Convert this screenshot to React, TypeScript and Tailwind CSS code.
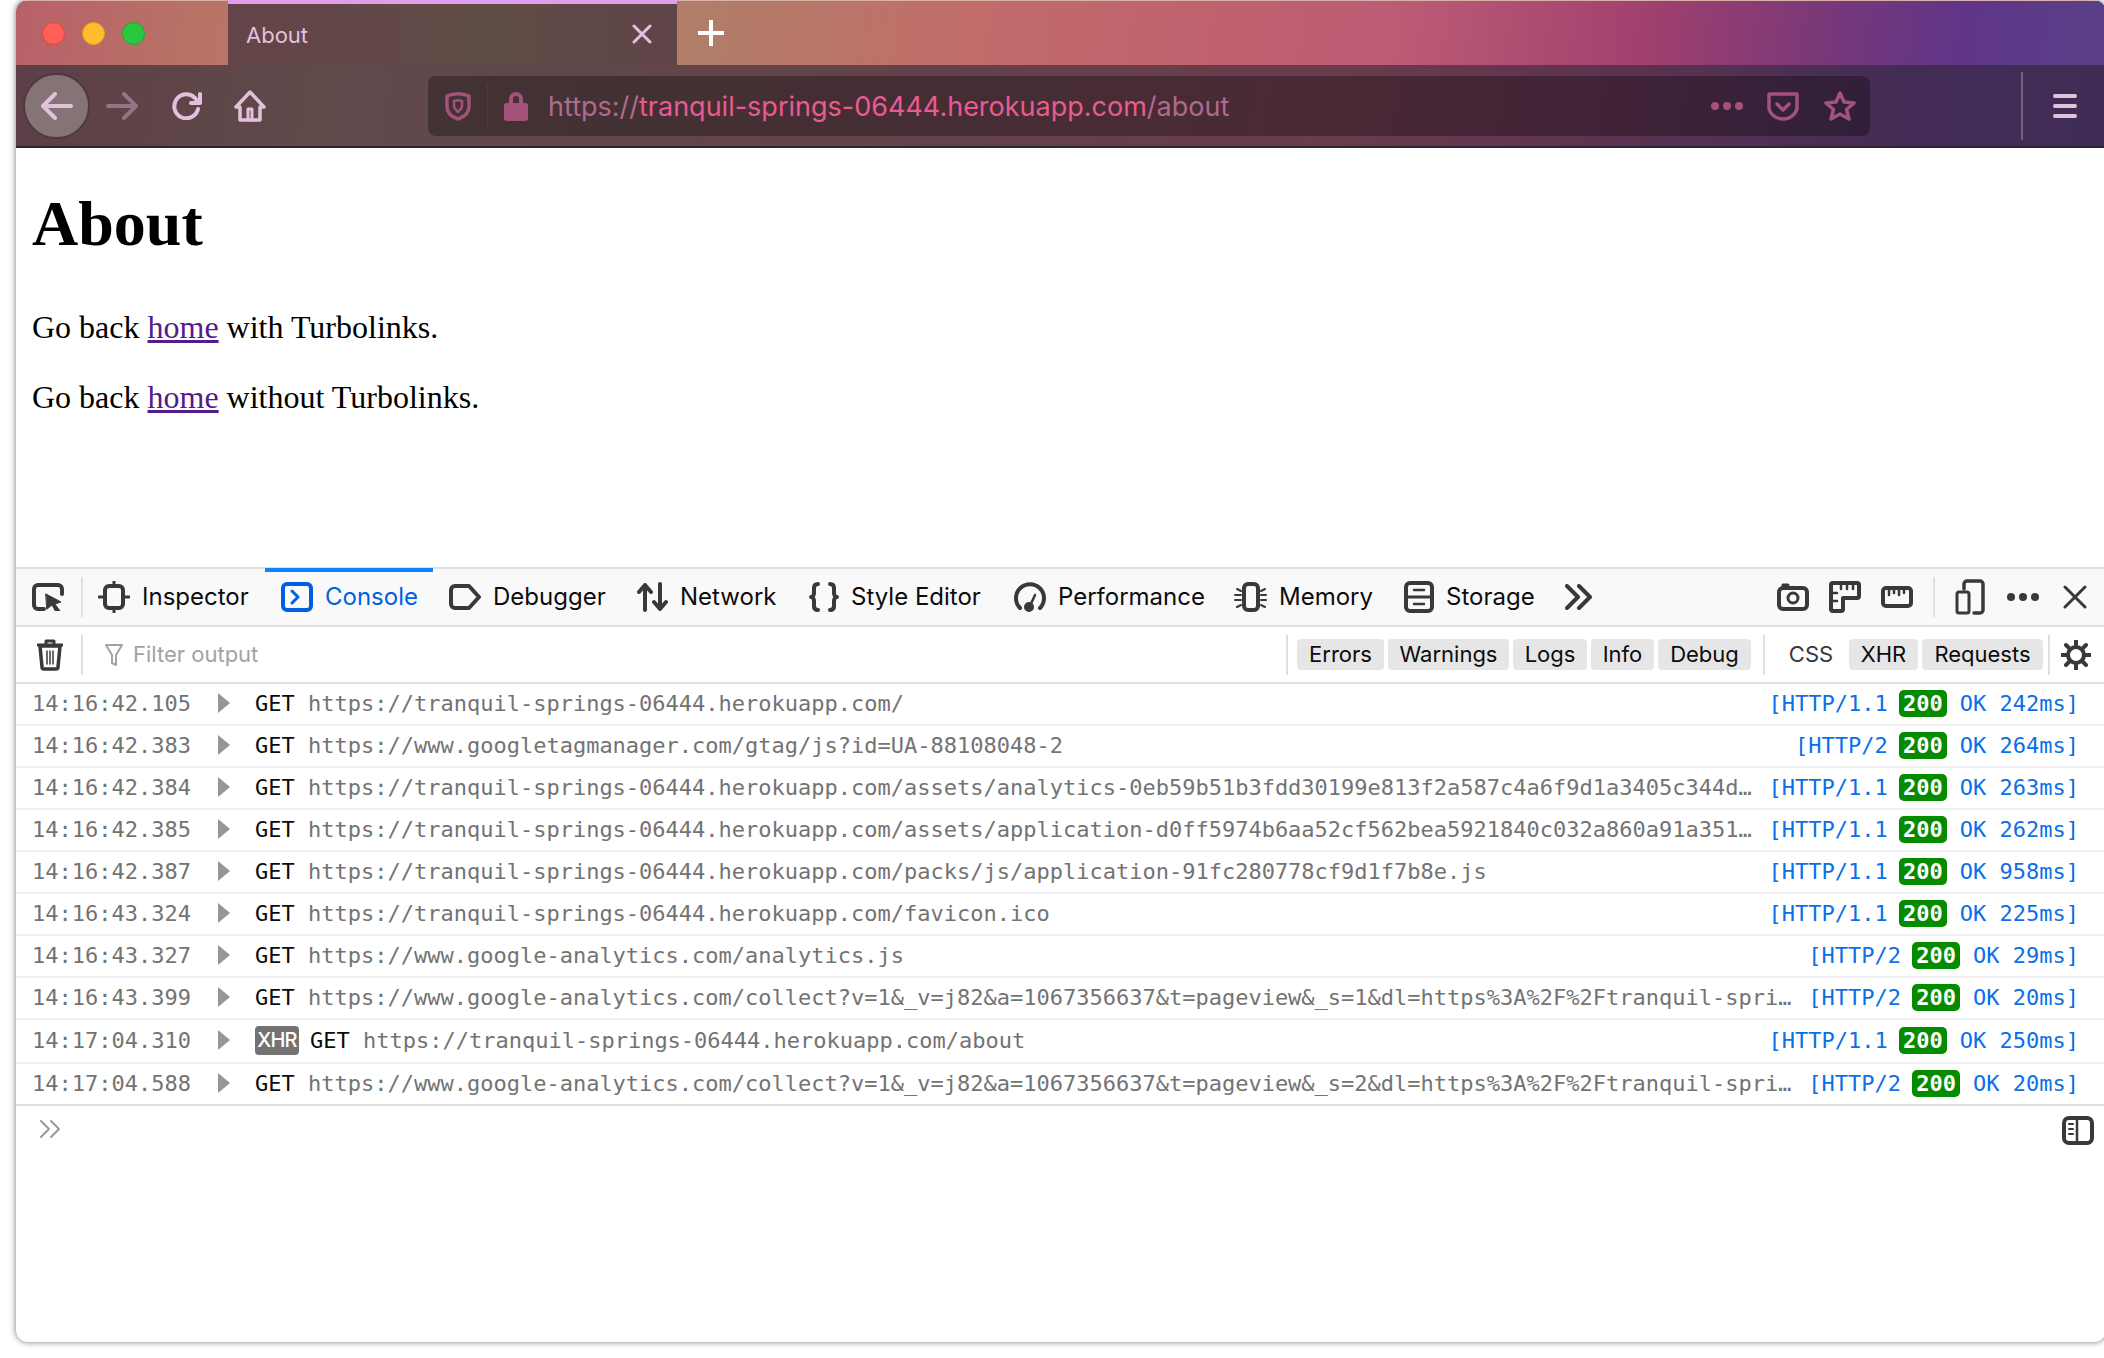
import type { ReactNode } from 'react';

const sans = "font-['Inter','Noto_Sans',sans-serif]";
const mono = "font-['DejaVu_Sans_Mono',monospace]";

function Ico({ w, h, children, className }: { w: number; h: number; children: ReactNode; className?: string }) {
  return (
    <svg
      width={w}
      height={h}
      viewBox={`0 0 ${w} ${h}`}
      fill="none"
      stroke="currentColor"
      strokeWidth={4}
      strokeLinecap="round"
      strokeLinejoin="round"
      className={`shrink-0 ${className ?? ''}`}
    >
      {children}
    </svg>
  );
}

function DevTab({ label, width, active, icon }: { label: string; width: string; active?: boolean; icon: ReactNode }) {
  return (
    <div className={`relative flex h-full items-center gap-3 pl-4 ${width} ${active ? 'text-[#0060df]' : 'text-[#0c0c0d]'}`}>
      {active && <div className="absolute inset-x-0 -top-px h-1 bg-[#0a84ff]" />}
      <div className={active ? 'text-[#0060df]' : 'text-[#38383d]'}>{icon}</div>
      <span>{label}</span>
    </div>
  );
}

function Pill({ label, width, off }: { label: string; width: string; off?: boolean }) {
  return (
    <div className={`flex h-[31px] items-center justify-center rounded ${width} ${off ? '' : 'bg-[#e6e6e6]'} ${off ? 'text-[#38383d]' : 'text-[#0c0c0d]'}`}>
      {label}
    </div>
  );
}

type Req = { time: string; url: string; proto: string; ok: string; xhr?: boolean };

const reqs: Req[] = [
  { time: '14:16:42.105', url: 'https://tranquil-springs-06444.herokuapp.com/', proto: 'HTTP/1.1', ok: '242ms' },
  { time: '14:16:42.383', url: 'https://www.googletagmanager.com/gtag/js?id=UA-88108048-2', proto: 'HTTP/2', ok: '264ms' },
  { time: '14:16:42.384', url: 'https://tranquil-springs-06444.herokuapp.com/assets/analytics-0eb59b51b3fdd30199e813f2a587c4a6f9d1a3405c344d1f0b7e2a9c.js', proto: 'HTTP/1.1', ok: '263ms' },
  { time: '14:16:42.385', url: 'https://tranquil-springs-06444.herokuapp.com/assets/application-d0ff5974b6aa52cf562bea5921840c032a860a91a3517c4e9b2d06f1.js', proto: 'HTTP/1.1', ok: '262ms' },
  { time: '14:16:42.387', url: 'https://tranquil-springs-06444.herokuapp.com/packs/js/application-91fc280778cf9d1f7b8e.js', proto: 'HTTP/1.1', ok: '958ms' },
  { time: '14:16:43.324', url: 'https://tranquil-springs-06444.herokuapp.com/favicon.ico', proto: 'HTTP/1.1', ok: '225ms' },
  { time: '14:16:43.327', url: 'https://www.google-analytics.com/analytics.js', proto: 'HTTP/2', ok: '29ms' },
  { time: '14:16:43.399', url: 'https://www.google-analytics.com/collect?v=1&_v=j82&a=1067356637&t=pageview&_s=1&dl=https%3A%2F%2Ftranquil-springs-06444.herokuapp.com%2F', proto: 'HTTP/2', ok: '20ms' },
  { time: '14:17:04.310', url: 'https://tranquil-springs-06444.herokuapp.com/about', proto: 'HTTP/1.1', ok: '250ms', xhr: true },
  { time: '14:17:04.588', url: 'https://www.google-analytics.com/collect?v=1&_v=j82&a=1067356637&t=pageview&_s=2&dl=https%3A%2F%2Ftranquil-springs-06444.herokuapp.com%2Fabout', proto: 'HTTP/2', ok: '20ms' },
];

function Row({ r, last }: { r: Req; last: boolean }) {
  return (
    <div className={`flex items-center whitespace-pre border-b-2 pb-[2px] pl-[16px] pr-[27px] ${r.xhr ? 'h-[44px]' : 'h-[42px]'} ${last ? 'border-[#e0e0e2]' : 'border-[#f0f0f4]'}`}>
      <span className="w-[159px] shrink-0 text-[#737373]">{r.time}</span>
      <svg width="12" height="20" viewBox="0 0 12 20" className="ml-[27px] mr-[25px] shrink-0 text-[#969696]" fill="currentColor">
        <path d="M0 0l12 10-12 10z" />
      </svg>
      {r.xhr && (
        <span className={`mr-[11px] flex h-[29px] w-[44px] shrink-0 items-center justify-center rounded bg-[#737373] text-[20px] font-medium tracking-[-0.8px] text-white ${sans}`}>XHR</span>
      )}
      <span className="shrink-0 text-[#0c0c0d]">GET </span>
      <span className="min-w-0 flex-1 truncate text-[#737373]">{r.url}</span>
      <div className="ml-[12px] flex shrink-0 items-center text-[#0a6fe8]">
        <span>[{r.proto}</span>
        <span className="ml-[11px] mr-[8px] flex h-[27px] w-[48px] items-center justify-center rounded-[5px] bg-[#058b00] font-bold text-white">200</span>
        <span className="ml-[5px]">OK {r.ok}]</span>
      </div>
    </div>
  );
}

export default function App() {
  return (
    <div className="h-[1358px] w-[2104px] overflow-hidden bg-white pl-4">
      <div className="flex h-[1342px] w-[2090px] flex-col overflow-hidden rounded-xl bg-white shadow-[0_0_6px_rgba(0,0,0,0.55)]">
        {/* browser chrome */}
        <div className="flex h-[65px] shrink-0 items-stretch border-t border-[#d9b0a8] bg-[linear-gradient(98deg,#b8606a_0%,#b87a65_12%,#b07d68_33%,#c06f6a_44%,#c0606f_58%,#bd5b75_66%,#a0406e_78%,#7a3878_86%,#603588_93%,#5a4088_100%)]">
          <div className="flex w-[212px] items-center gap-[17px] pl-[26px]">
            <div className="h-[23px] w-[23px] rounded-full border border-[#e0443e] bg-[#ff5f57]" />
            <div className="h-[23px] w-[23px] rounded-full border border-[#dea123] bg-[#ffbd2e]" />
            <div className="h-[23px] w-[23px] rounded-full border border-[#1aab29] bg-[#28c840]" />
          </div>
          <div className="relative flex w-[449px] items-center justify-between bg-[linear-gradient(90deg,#644448,#5f4c46_60%,#5f4448)] pl-[18px] pr-[25px] text-[#e2c1dc]">
            <div className="absolute inset-x-0 -top-px h-[4px] bg-[#e29ded]" />
            <span className={`${sans} mt-[4px] text-[22px]`}>About</span>
            <Ico w={20} h={20} className="mt-[2px]">
              <path d="M2 2l16 16M18 2L2 18" strokeWidth={3} />
            </Ico>
          </div>
          <div className="ml-[20px] flex items-center text-white">
            <Ico w={28} h={28}>
              <path d="M14 1v26M1 14h26" strokeWidth={4} strokeLinecap="butt" />
            </Ico>
          </div>
        </div>

        <div className="flex h-[83px] shrink-0 items-center border-b-2 border-[#2a2530] bg-[linear-gradient(98deg,#5c3f47_0%,#604a4a_15%,#62454a_33%,#65404a_48%,#6a3c4c_62%,#5e3350_76%,#432c55_90%,#3f2c55_100%)] text-[#e2c1dc]">
          <div className="ml-[7px] flex h-[66px] w-[67px] items-center justify-center rounded-full border-2 border-[#4d3a40] bg-[#857376]">
            <Ico w={32} h={28}>
              <path d="M30 14H3M14 2L2 14l12 12" />
            </Ico>
          </div>
          <Ico w={32} h={28} className="ml-[16px] opacity-40">
            <path d="M2 14h27M18 2l12 12-12 12" />
          </Ico>
          <Ico w={30} h={28} className="ml-[34px]">
            <path d="M26 17a12 12 0 1 1-3-11l3 4" />
            <path d="M28 2v9h-9" />
          </Ico>
          <Ico w={32} h={32} className="ml-[32px]">
            <path d="M16 2L2 17h4v13h20V17h4z" strokeWidth={3.5} />
            <path d="M14 30V19h4v11" strokeWidth={3} />
          </Ico>

          <div className="ml-[162px] flex h-[60px] w-[1442px] items-center rounded-lg bg-black/30">
            <Ico w={26} h={30} className="ml-[17px] text-[#a5527a]">
              <path d="M2 5c7-3 15-3 22 0v11c0 6-5 10-11 12C7 26 2 22 2 16z" strokeWidth={3.5} />
              <path d="M9 10c3-1 5-1 8 0v5c0 2-2 4-4 6-2-2-4-4-4-6z" strokeWidth={2.5} />
            </Ico>
            <div className="ml-[16px] h-[44px] w-px bg-white/5" />
            <svg width="24" height="30" viewBox="0 0 24 30" className="ml-[16px] shrink-0 text-[#a5527a]" fill="currentColor">
              <path d="M5 12V8a7 7 0 0 1 14 0v4h2a3 3 0 0 1 3 3v12a3 3 0 0 1-3 3H3a3 3 0 0 1-3-3V15a3 3 0 0 1 3-3zm4 0h6V8a3 3 0 0 0-6 0z" />
            </svg>
            <div className={`${sans} ml-[20px] mt-[3px] flex-1 whitespace-pre text-[27px] text-[#b06a8e]`}>
              https://<span className="text-[#ea5a92]">tranquil-springs-06444.herokuapp.com</span>/about
            </div>
            <svg width="32" height="10" viewBox="0 0 32 10" className="shrink-0 text-[#a5527a]" fill="currentColor">
              <circle cx="4" cy="5" r="4" />
              <circle cx="16" cy="5" r="4" />
              <circle cx="28" cy="5" r="4" />
            </svg>
            <Ico w={32} h={30} className="ml-[24px] text-[#a5527a]">
              <path d="M2 3h28v13c0 6-6 12-14 12S2 22 2 16z" strokeWidth={3.5} />
              <path d="M10 13l6 6 6-6" strokeWidth={3.5} />
            </Ico>
            <Ico w={32} h={32} className="ml-[25px] mr-[14px] text-[#a5527a]">
              <path d="M16 3l4 9 10 1-7.5 6.5L25 29l-9-5-9 5 2.500-9.500L2 13l10-1z" strokeWidth={3.5} />
            </Ico>
          </div>

          <div className="ml-[151px] h-[68px] w-0.5 bg-white/25" />
          <div className="ml-[30px] flex flex-col gap-[6px]">
            <div className="h-1 w-6 rounded-full bg-[#e2c1dc]" />
            <div className="h-1 w-6 rounded-full bg-[#e2c1dc]" />
            <div className="h-1 w-6 rounded-full bg-[#e2c1dc]" />
          </div>
        </div>

        {/* page */}
        <div className="h-[419px] shrink-0 bg-white pl-4 pt-[39px] font-['Liberation_Serif',serif] text-black">
          <h1 className="text-[64px] font-bold leading-[74px]">About</h1>
          <p className="mt-[48px] text-[32px] leading-[36px]">
            Go back <a className="text-[#551a8b] underline">home</a> with Turbolinks.
          </p>
          <p className="mt-[34px] text-[32px] leading-[36px]">
            Go back <a className="text-[#551a8b] underline">home</a> without Turbolinks.
          </p>
        </div>

        {/* devtools toolbar */}
        <div className={`${sans} flex h-[60px] shrink-0 items-center border-y-2 border-[#e0e0e2] bg-[#f9f9fa] text-[24px]`}>
          <Ico w={32} h={28} className="ml-4 text-[#38383d]">
            <path d="M12 26H6a4 4 0 0 1-4-4V6a4 4 0 0 1 4-4h20a4 4 0 0 1 4 4v5" />
            <path d="M14 11l15 8-6 2 5 7-4 1-4-7-5 4z" fill="currentColor" strokeWidth={1} />
          </Ico>
          <div className="ml-[17px] h-10 w-0.5 bg-[#e0e0e2]" />
          <div className="-ml-px flex h-full items-center">
            <DevTab
              label="Inspector"
              width="w-[183px]"
              icon={
                <Ico w={32} h={32} className="block">
                  <rect x="7" y="5" width="18" height="22" rx="4" />
                  <path d="M1 16h5M26 16h5M16 1v3M16 28v3" strokeWidth={3} />
                </Ico>
              }
            />
            <DevTab
              label="Console"
              width="w-[168px]"
              active
              icon={
                <Ico w={32} h={30} className="block">
                  <rect x="2" y="2" width="28" height="26" rx="4" />
                  <path d="M11 9l6 6-6 6" strokeWidth={3} />
                </Ico>
              }
            />
            <DevTab
              label="Debugger"
              width="w-[188px]"
              icon={
                <Ico w={32} h={26} className="block">
                  <path d="M6 2h14l10 11-10 11H6a4 4 0 0 1-4-4V6a4 4 0 0 1 4-4z" />
                </Ico>
              }
            />
            <DevTab
              label="Network"
              width="w-[172px]"
              icon={
                <Ico w={31} h={30} className="block">
                  <path d="M8 28V3M2 10l6-7 6 7M23 2v25M17 20l6 7 6-7" />
                </Ico>
              }
            />
            <DevTab
              label="Style Editor"
              width="w-[205px]"
              icon={
                <Ico w={30} h={30} className="block">
                  <path d="M9 2c-3 0-4 2-4 4v5c0 2-1 4-3 4 2 0 3 2 3 4v5c0 2 1 4 4 4" />
                  <path d="M21 2c3 0 4 2 4 4v5c0 2 1 4 3 4-2 0-3 2-3 4v5c0 2-1 4-4 4" />
                </Ico>
              }
            />
            <DevTab
              label="Performance"
              width="w-[222px]"
              icon={
                <Ico w={32} h={30} className="block">
                  <path d="M6 26a14 14 0 1 1 20 0" />
                  <path d="M16 24l5-11" strokeWidth={2.5} />
                  <circle cx="15" cy="25" r="3" fill="currentColor" />
                </Ico>
              }
            />
            <DevTab
              label="Memory"
              width="w-[168px]"
              icon={
                <Ico w={33} h={32} className="-ml-0.5 block">
                  <rect x="10" y="3" width="14" height="26" rx="4" />
                  <path d="M3 8l4 2M1 14h6M1 19h6M3 26l4-2M31 8l-4 2M32 14h-5M32 19h-5M31 26l-4-2" strokeWidth={2} />
                </Ico>
              }
            />
            <DevTab
              label="Storage"
              width="w-[164px]"
              icon={
                <Ico w={30} h={32} className="block">
                  <rect x="2" y="2" width="26" height="28" rx="4" />
                  <path d="M2 16h26" strokeWidth={3} />
                  <path d="M10 9h10M10 23h10" strokeWidth={2.500} />
                </Ico>
              }
            />
          </div>
          <Ico w={27} h={26} className="ml-[13px] text-[#38383d]">
            <path d="M2 2l11 11L2 24M14 2l11 11-11 11" />
          </Ico>

          <div className="ml-auto flex items-center pr-[19px] text-[#38383d]">
            <Ico w={32} h={28}>
              <rect x="2" y="5" width="28" height="21" rx="4" />
              <path d="M6 4V2h5" strokeWidth={3} />
              <circle cx="16" cy="15" r="5" strokeWidth={3} />
            </Ico>
            <Ico w={32} h={32} className="ml-[20px]">
              <path d="M4 2h24a2 2 0 0 1 2 2v11a2 2 0 0 1-2 2H14v11a2 2 0 0 1-2 2H4a2 2 0 0 1-2-2V4a2 2 0 0 1 2-2z" />
              <path d="M12 3v5M18 3v5M24 3v5M3 12h5M3 20h5" strokeWidth={2.500} />
            </Ico>
            <Ico w={32} h={22} className="ml-[20px]">
              <rect x="2" y="2" width="28" height="18" rx="3" />
              <path d="M8 3v6M13 3v4M18 3v6M23 3v4" strokeWidth={2.500} />
            </Ico>
            <div className="ml-[20px] h-10 w-0.5 bg-[#e0e0e2]" />
            <Ico w={30} h={36} className="ml-[20px]">
              <path d="M9 10V5a3 3 0 0 1 3-3h13a3 3 0 0 1 3 3v26a3 3 0 0 1-3 3h-6" strokeWidth={3.5} />
              <rect x="2" y="13" width="12" height="21" rx="2" strokeWidth={3} />
            </Ico>
            <svg width="32" height="8" viewBox="0 0 32 8" className="ml-[22px] shrink-0" fill="currentColor">
              <circle cx="4" cy="4" r="4" />
              <circle cx="16" cy="4" r="4" />
              <circle cx="28" cy="4" r="4" />
            </svg>
            <Ico w={24} h={24} className="ml-[24px]">
              <path d="M2 2l20 20M22 2L2 22" strokeWidth={3} />
            </Ico>
          </div>
        </div>

        {/* filter bar */}
        <div className={`${sans} flex h-[57px] shrink-0 items-center border-b-2 border-[#e0e0e2] bg-white text-[22px]`}>
          <Ico w={26} h={32} className="ml-[21px] text-[#38383d]">
            <path d="M3 7h20l-2 21a2 2 0 0 1-2 2H7a2 2 0 0 1-2-2z" fill="none" strokeWidth={3.5} />
            <path d="M1 6h24M9 5V2h8v3" strokeWidth={3} />
            <path d="M10 12v13M13 12v13M16 12v13" strokeWidth={1.500} />
          </Ico>
          <div className="ml-[18px] h-10 w-0.5 bg-[#e0e0e2]" />
          <Ico w={20} h={26} className="ml-[21px] text-[#a3a3a3]">
            <path d="M2 3h16l-6 10v10l-4-2v-8z" strokeWidth={2} />
          </Ico>
          <span className="ml-[9px] text-[#a3a3a3]">Filter output</span>
          <div className="ml-auto flex items-center gap-1 pr-[15px]">
            <div className="mr-[5px] h-10 w-0.5 bg-[#e0e0e2]" />
            <Pill label="Errors" width="w-[87px]" />
            <Pill label="Warnings" width="w-[121px]" />
            <Pill label="Logs" width="w-[74px]" />
            <Pill label="Info" width="w-[63px]" />
            <Pill label="Debug" width="w-[93px]" />
            <div className="mx-[8px] h-10 w-0.5 bg-[#e0e0e2]" />
            <Pill label="CSS" width="w-[68px]" off />
            <Pill label="XHR" width="w-[69px]" />
            <Pill label="Requests" width="w-[121px]" />
            <div className="ml-px h-10 w-0.5 bg-[#e0e0e2]" />
            <Ico w={30} h={30} className="ml-[7px] text-[#38383d]">
              <circle cx="15" cy="15" r="8" />
              <path d="M15 1v4M15 25v4M1 15h4M25 15h4M5 5l3 3M22 22l3 3M25 5l-3 3M8 22l-3 3" strokeWidth={4} />
            </Ico>
          </div>
        </div>

        {/* messages */}
        <div className={`${mono} shrink-0 text-[22px]`}>
          {reqs.map((r, i) => (
            <Row key={r.time} r={r} last={i === reqs.length - 1} />
          ))}
        </div>

        <div className="flex items-start justify-between pl-[23px] pr-[12px] pt-[10px]">
          <Ico w={22} h={20} className="mt-[3px] text-[#999999]">
            <path d="M2 2l8 8-8 8M12 2l8 8-8 8" strokeWidth={2} />
          </Ico>
          <Ico w={32} h={29} className="text-[#38383d]">
            <rect x="2" y="2" width="28" height="25" rx="5" />
            <path d="M15 3v23" strokeWidth={2.500} />
            <path d="M7 8h4M7 13h4M7 18h4" strokeWidth={2} />
          </Ico>
        </div>
      </div>
    </div>
  );
}
